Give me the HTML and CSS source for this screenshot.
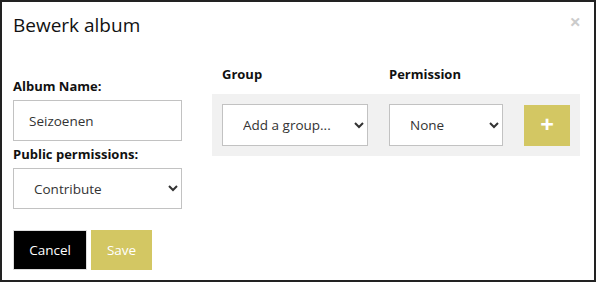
FILE: index.html
```html
<!DOCTYPE html>
<html lang="en">
<head>
    <meta charset="UTF-8">
    <title>Bewerk album</title>
    <link rel="stylesheet" href="styles.css">
</head>
<body>
    <div class="modal">
        <div class="modal-header">
            <h4 class="modal-title">Bewerk album</h4>
            <button class="close" type="button">&times;</button>
        </div>
        <div class="modal-body">
            <div class="album-form">
                <label class="field-label" for="albumName">Album Name:</label>
                <input class="field" id="albumName" type="text" value="Seizoenen">
                <label class="field-label" for="publicPerm">Public permissions:</label>
                <select class="field" id="publicPerm">
                    <option>Contribute</option>
                </select>
                <div class="actions">
                    <button class="btn btn-cancel" type="button">Cancel</button>
                    <button class="btn btn-save" type="button">Save</button>
                </div>
            </div>
            <div class="group-perms">
                <div class="perm-head">
                    <span class="col-group">Group</span>
                    <span class="col-perm">Permission</span>
                </div>
                <div class="perm-row">
                    <select class="field group-select">
                        <option>Add a group...</option>
                    </select>
                    <select class="field perm-select">
                        <option>None</option>
                    </select>
                    <button class="btn btn-add" type="button">+</button>
                </div>
            </div>
        </div>
    </div>
</body>
</html>
```

FILE: styles.css
```css
body {
    margin: 0;
    font-family: "Open Sans", "Noto Sans", sans-serif;
    color: #111;
    background: #fff;
}

.modal {
    width: 596px;
    height: 282px;
    box-sizing: border-box;
    border: 2px solid #222;
    background: #fff;
}

.modal-header {
    display: flex;
    justify-content: space-between;
    align-items: flex-start;
    padding: 9px 11px 0 11px;
}

.modal-title {
    margin: 0;
    font-size: 19px;
    font-weight: normal;
    line-height: 28px;
}

.close {
    background: none;
    border: none;
    padding: 0;
    margin: 1px 2px 0 0;
    font-family: inherit;
    font-size: 20px;
    font-weight: bold;
    line-height: 20px;
    color: #000;
    opacity: 0.2;
    cursor: pointer;
}

.modal-body {
    display: flex;
    gap: 30px;
    padding: 26px 11px 0 11px;
}

.album-form {
    width: 169px;
    display: flex;
    flex-direction: column;
    padding-top: 12px;
}

.field-label {
    font-size: 13px;
    font-weight: bold;
    line-height: 18px;
    margin-bottom: 5px;
}

.field {
    box-sizing: border-box;
    height: 41px;
    border: 1px solid #c2c2c2;
    border-radius: 0;
    background: #fff;
    font-family: inherit;
    font-size: 13.5px;
    color: #333;
    padding: 0 15px;
    margin: 0 0 4px 0;
}

select.field {
    padding-left: 16px;
}

.album-form select.field {
    margin-bottom: 0;
}

.actions {
    display: flex;
    gap: 4px;
    margin-top: 21px;
}

.btn {
    height: 40px;
    border: none;
    font-family: inherit;
    font-size: 13.5px;
    color: #fff;
    cursor: pointer;
}

.btn-cancel {
    width: 74px;
    background: #000;
    border: 1px solid #ddd;
}

.btn-save {
    width: 61px;
    background: #d3c763;
}

.group-perms {
    width: 368px;
}

.perm-head {
    display: flex;
    font-size: 13px;
    font-weight: bold;
    line-height: 18px;
    padding: 0 10px 11px 10px;
}

.col-group {
    width: 167px;
}

.perm-row {
    display: flex;
    align-items: center;
    gap: 21px;
    padding: 10px;
    background: #f1f1f1;
}

.perm-row .field {
    height: 42px;
    margin: 0;
}

.group-select {
    width: 146px;
}

.perm-select {
    width: 114px;
}

.btn-add {
    width: 46px;
    height: 41px;
    background: #d3c763;
    font-size: 24px;
    font-weight: bold;
    line-height: 1;
    padding: 0 0 3px 0;
}
```
